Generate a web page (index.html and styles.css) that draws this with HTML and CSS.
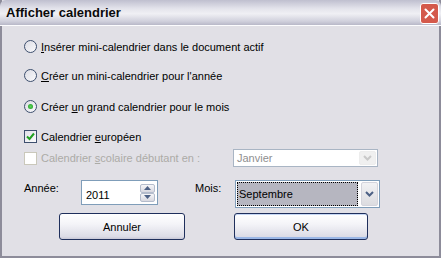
FILE: index.html
```html
<!DOCTYPE html>
<html>
<head>
    <meta charset="UTF-8">
    <title>Afficher calendrier</title>
    <link rel="stylesheet" href="styles.css">
</head>
<body>
    <div class="window">
        <div class="titlebar">
            <span class="title">Afficher calendrier</span>
            <div class="close-btn">
                <svg width="11" height="11" viewBox="0 0 11 11">
                    <path d="M1.5 1.5 L9.5 9.5 M9.5 1.5 L1.5 9.5" stroke="#ffffff" stroke-width="2" stroke-linecap="round"/>
                </svg>
            </div>
        </div>

        <div class="content">
            <label class="option row-1">
                <span class="radio"></span>
                <span><u>I</u>nsérer mini-calendrier dans le document actif</span>
            </label>
            <label class="option row-2">
                <span class="radio"></span>
                <span><u>C</u>réer un mini-calendrier pour l'année</span>
            </label>
            <label class="option row-3">
                <span class="radio checked"></span>
                <span>Créer <u>u</u>n grand calendrier pour le mois</span>
            </label>

            <label class="option row-4">
                <span class="check checked">
                    <svg width="9" height="9" viewBox="0 0 9 9">
                        <path d="M1 4.5 L3.5 7 L8 1.5" fill="none" stroke="#21a121" stroke-width="2"/>
                    </svg>
                </span>
                <span>Calendrier <u>e</u>uropéen</span>
            </label>

            <div class="school-row">
                <label class="option disabled">
                    <span class="check disabled"></span>
                    <span>Calendrier <u>s</u>colaire débutant en :</span>
                </label>
                <div class="select disabled">
                    <span class="select-value">Janvier</span>
                    <span class="select-arrow">
                        <svg width="9" height="6" viewBox="0 0 9 6">
                            <path d="M1 1 L4.5 4.5 L8 1" fill="none" stroke="#c9c9c9" stroke-width="2"/>
                        </svg>
                    </span>
                </div>
            </div>

            <div class="date-row">
                <span class="field-label">Année:</span>
                <div class="spin-box">
                    <span class="spin-value">2011</span>
                    <span class="spin-buttons">
                        <span class="spin-btn">
                            <svg width="7" height="4" viewBox="0 0 7 4"><path d="M0 4 L3.5 0 L7 4 Z" fill="#4d6185"/></svg>
                        </span>
                        <span class="spin-btn">
                            <svg width="7" height="4" viewBox="0 0 7 4"><path d="M0 0 L3.5 4 L7 0 Z" fill="#4d6185"/></svg>
                        </span>
                    </span>
                </div>
                <span class="field-label mois">Mois:</span>
                <div class="select month">
                    <span class="select-value focused">Septembre</span>
                    <span class="select-arrow">
                        <svg width="9" height="6" viewBox="0 0 9 6">
                            <path d="M1 1 L4.5 4.5 L8 1" fill="none" stroke="#4d6185" stroke-width="2"/>
                        </svg>
                    </span>
                </div>
            </div>

            <div class="button-row">
                <button class="btn cancel">Annuler</button>
                <button class="btn ok">OK</button>
            </div>
        </div>
    </div>
</body>
</html>
```

FILE: styles.css
```css
body {
    margin: 0;
    font-family: "Liberation Sans", Arial, sans-serif;
    font-size: 11px;
    color: #000;
}
.window {
    width: 441px;
    height: 258px;
    box-sizing: border-box;
    background-color: #e1e0e6;
    border-left: 2px solid #8d8c9a;
    border-right: 2px solid #8d8c9a;
    border-bottom: 2px solid #8d8c9a;
    display: flex;
    flex-direction: column;
}
.titlebar {
    height: 26px;
    margin: 0 -2px;
    display: flex;
    align-items: center;
    justify-content: space-between;
    padding: 0 2px 0 6px;
    background: linear-gradient(#bfbfcf, #e4e4ec 35%, #f0f0f4 55%, #d0d0dc 85%, #b8b8c8);
    border-bottom: 1px solid #fcfcfe;
    box-sizing: border-box;
    border-radius: 6px 6px 0 0;
}
.title {
    font-weight: bold;
    font-size: 13px;
    color: #0a0a0a;
}
.close-btn {
    width: 19px;
    height: 21px;
    box-sizing: border-box;
    border: 1px solid #ffffff;
    border-radius: 3px;
    background-color: #d4594b;
    display: flex;
    align-items: center;
    justify-content: center;
    margin-top: 1px;
}
.content {
    padding: 14px 0 0 22px;
    display: flex;
    flex-direction: column;
}
.option {
    display: flex;
    align-items: center;
    gap: 4px;
    height: 13px;
    white-space: nowrap;
}
.row-2 {
    margin-top: 16px;
}
.row-3 {
    margin-top: 18px;
}
.row-4 {
    margin-top: 17px;
}
.option.disabled {
    color: #acaba6;
    width: 209px;
}
.radio {
    width: 11px;
    height: 11px;
    border: 1px solid #3d4f6e;
    border-radius: 50%;
    background: linear-gradient(135deg, #dcdce4, #fafafc);
    display: flex;
    align-items: center;
    justify-content: center;
}
.radio.checked:after {
    content: "";
    width: 5px;
    height: 5px;
    border-radius: 50%;
    background: radial-gradient(#5bd35b, #1e9a1e);
}
.check {
    width: 11px;
    height: 11px;
    border: 1px solid #3d4f6e;
    background: linear-gradient(135deg, #e0e0e8, #fcfcfd);
    display: flex;
    align-items: center;
    justify-content: center;
}
.check.disabled {
    border-color: #cac8bb;
    background: #fff;
}
.school-row {
    margin-top: 6px;
    display: flex;
    align-items: center;
    height: 18px;
}
.select {
    width: 145px;
    box-sizing: border-box;
    border: 1px solid #7f9db9;
    background-color: #fff;
    display: flex;
    align-items: center;
    justify-content: space-between;
    padding: 1px;
}
.select.disabled {
    height: 18px;
    border-color: #a9b5c4;
    color: #8f8f8f;
}
.select-value {
    padding-left: 2px;
}
.select-arrow {
    width: 17px;
    height: 100%;
    box-sizing: border-box;
    display: flex;
    align-items: center;
    justify-content: center;
    background: linear-gradient(#f2f2f4, #dcdce0);
    border: 1px solid #d4d4dc;
    border-radius: 2px;
}
.select.disabled .select-arrow {
    background: #f0f0f0;
    border-color: #ededed;
}
.date-row {
    margin-top: 13px;
    display: flex;
    align-items: flex-start;
    height: 28px;
}
.field-label {
    width: 57px;
    margin-top: 2px;
}
.field-label.mois {
    width: 40px;
    margin-left: 37px;
}
.spin-box {
    width: 77px;
    height: 25px;
    box-sizing: border-box;
    border: 1px solid #7f9db9;
    background-color: #fff;
    display: flex;
    align-items: center;
    justify-content: space-between;
    padding: 2px;
}
.spin-value {
    padding-left: 2px;
    margin-top: 4px;
}
.spin-buttons {
    display: flex;
    flex-direction: column;
    width: 15px;
    height: 18px;
}
.spin-btn {
    flex: 1;
    border: 1px solid #b4bccc;
    border-radius: 2px;
    background: linear-gradient(#f6f6f8, #d8d8e0);
    display: flex;
    align-items: center;
    justify-content: center;
}
.select.month {
    height: 28px;
}
.select-value.focused {
    flex: 1;
    height: 100%;
    box-sizing: border-box;
    display: flex;
    align-items: center;
    background-color: #b6b6c0;
    outline: 1px dotted #000;
    outline-offset: -1px;
    margin-right: 3px;
    padding-left: 2px;
}
.button-row {
    margin-top: 5px;
    display: flex;
    gap: 49px;
    padding-left: 35px;
}
.btn {
    height: 27px;
    font-family: "Liberation Sans", Arial, sans-serif;
    font-size: 11px;
    color: #000;
    border: 1px solid #1f2f5c;
    border-radius: 3px;
    background: linear-gradient(#ffffff, #f4f4f8 40%, #dcdce6 90%, #c8c8d6);
    padding: 0;
}
.btn.cancel {
    width: 126px;
}
.btn.ok {
    width: 134px;
    box-shadow: inset 0 -2px 0 #9bb7e6, inset 0 1px 0 #c6d7f4;
}
```
